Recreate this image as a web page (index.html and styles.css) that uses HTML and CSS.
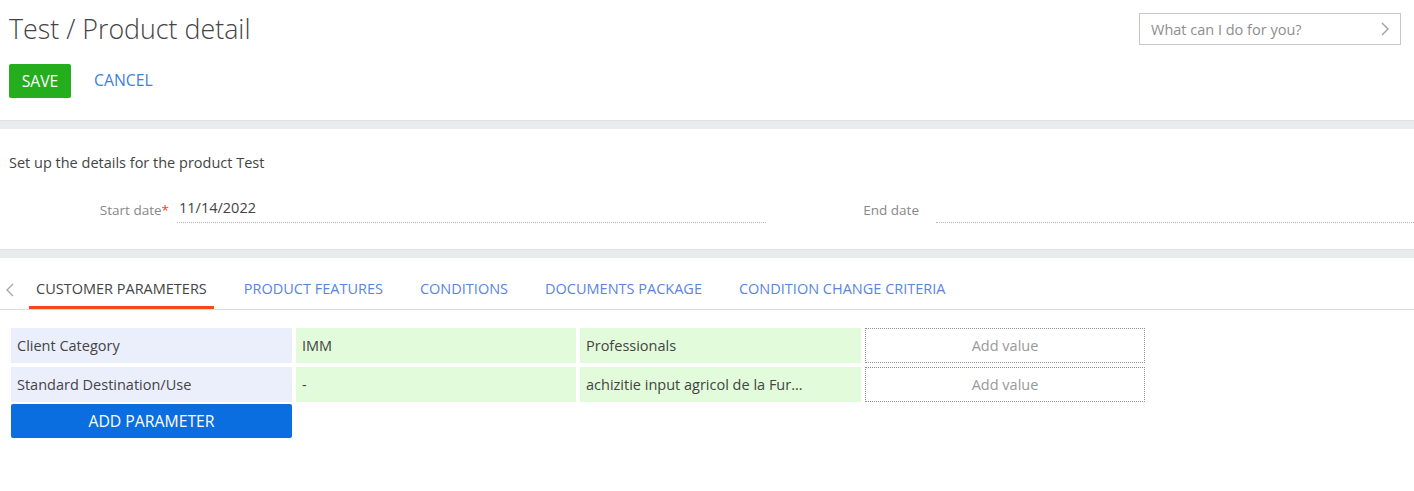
FILE: index.html
```html
<!DOCTYPE html>
<html lang="en">
<head>
    <meta charset="UTF-8">
    <meta name="viewport" content="width=device-width, initial-scale=1.0">
    <title>Test / Product detail</title>
    <link rel="stylesheet" href="styles.css">
</head>
<body>
    <div class="header">
        <div class="header-left">
            <h1 class="page-title">Test / Product detail</h1>
            <div class="actions">
                <button class="btn-save">SAVE</button>
                <a class="btn-cancel" href="#">CANCEL</a>
            </div>
        </div>
        <div class="search">
            <span class="search-text">What can I do for you?</span>
            <svg class="search-arrow" width="10" height="16" viewBox="0 0 10 16">
                <path d="M2 2 L8 8 L2 14" fill="none" stroke="#a0a0a0" stroke-width="1.4"/>
            </svg>
        </div>
    </div>

    <div class="band"></div>

    <div class="details">
        <p class="intro">Set up the details for the product Test</p>
        <div class="fields">
            <div class="field field-start">
                <label class="field-label">Start date<span class="required">*</span></label>
                <div class="field-value">11/14/2022</div>
            </div>
            <div class="field field-end">
                <label class="field-label">End date</label>
                <div class="field-value"></div>
            </div>
        </div>
    </div>

    <div class="band"></div>

    <div class="tabs">
        <svg class="tabs-prev" width="10" height="16" viewBox="0 0 10 16">
            <path d="M8 2 L2 8 L8 14" fill="none" stroke="#a8a8a8" stroke-width="1.4"/>
        </svg>
        <a class="tab active" href="#">CUSTOMER PARAMETERS</a>
        <a class="tab" href="#">PRODUCT FEATURES</a>
        <a class="tab" href="#">CONDITIONS</a>
        <a class="tab" href="#">DOCUMENTS PACKAGE</a>
        <a class="tab" href="#">CONDITION CHANGE CRITERIA</a>
    </div>

    <div class="params">
        <div class="param-row">
            <div class="cell cell-name">Client Category</div>
            <div class="cell cell-value">IMM</div>
            <div class="cell cell-value">Professionals</div>
            <div class="cell cell-add">Add value</div>
        </div>
        <div class="param-row">
            <div class="cell cell-name">Standard Destination/Use</div>
            <div class="cell cell-value">-</div>
            <div class="cell cell-value">achizitie input agricol de la Fur...</div>
            <div class="cell cell-add">Add value</div>
        </div>
        <button class="btn-add">ADD PARAMETER</button>
    </div>
</body>
</html>
```

FILE: styles.css
```css
body {
    margin: 0;
    font-family: "Open Sans", Arial, sans-serif;
    font-size: 14.5px;
    color: #444;
    background-color: #ffffff;
}
.header {
    display: flex;
    justify-content: space-between;
    height: 120px;
    padding: 0 13px 0 9px;
    box-sizing: border-box;
}
.page-title {
    margin: 0;
    padding-top: 11px;
    font-size: 26.8px;
    font-weight: 300;
    line-height: 36px;
    color: #444;
}
.actions {
    display: flex;
    align-items: center;
    margin-top: 17px;
}
.btn-save {
    height: 34px;
    width: 62px;
    padding: 0;
    background-color: #24ad1d;
    color: #fff;
    border: none;
    border-radius: 2px;
    font-family: inherit;
    font-size: 15.75px;
}
.btn-cancel {
    margin-left: 23px;
    margin-top: -3px;
    color: #3e7fd9;
    text-decoration: none;
    font-size: 15.75px;
}
.search {
    display: flex;
    align-items: center;
    justify-content: space-between;
    margin-top: 13px;
    width: 262px;
    height: 32px;
    padding: 0 10px 0 11px;
    border: 1px solid #c8c8c8;
    box-sizing: border-box;
}
.search-text {
    color: #8e8e8e;
}
.band {
    height: 8px;
    background-color: #e9ecec;
    border-top: 1px solid #dfe2e2;
}
.details {
    height: 120px;
    padding: 24px 0 0 9px;
    box-sizing: border-box;
}
.intro {
    margin: 0;
    line-height: 20px;
}
.fields {
    display: flex;
    margin-top: 25px;
}
.field {
    display: flex;
    align-items: flex-end;
}
.field-label {
    color: #888;
    font-size: 13.5px;
    text-align: right;
    padding-right: 8px;
    padding-bottom: 4px;
}
.field-start .field-label {
    width: 160px;
}
.field-end {
    flex: 1;
    margin-left: 72px;
}
.field-end .field-label {
    width: 81px;
    padding-right: 17px;
    box-sizing: content-box;
}
.required {
    color: #e4472d;
}
.field-value {
    height: 25px;
    line-height: 20px;
    padding-left: 2px;
    border-bottom: 1px dotted #b8b8b8;
    box-sizing: border-box;
}
.field-start .field-value {
    width: 589px;
}
.field-end .field-value {
    flex: 1;
}
.tabs {
    display: flex;
    align-items: flex-end;
    height: 52px;
    border-bottom: 1px solid #dcdcdc;
    box-sizing: border-box;
}
.tabs-prev {
    margin: 0 14px 11px 5px;
}
.tab {
    padding: 0 7px 8px;
    margin-right: 23px;
    color: #5b84df;
    text-decoration: none;
    line-height: 18px;
    border-bottom: 3px solid transparent;
}
.tab.active {
    color: #444;
    border-bottom-color: #f2481c;
}
.params {
    display: grid;
    grid-template-columns: 281px 280px 281px 280px;
    column-gap: 4px;
    padding: 18px 0 0 11px;
}
.param-row {
    display: contents;
}
.cell {
    height: 35px;
    margin-bottom: 4px;
    line-height: 35px;
    padding: 0 6px;
    box-sizing: border-box;
    white-space: nowrap;
    overflow: hidden;
}
.cell-name {
    background-color: #ebeffc;
}
.cell-value {
    background-color: #e2fbdb;
}
.cell-add {
    line-height: 33px;
    text-align: center;
    color: #999;
    border: 1px dotted #909090;
}
.btn-add {
    display: block;
    width: 281px;
    height: 34px;
    margin-top: -2px;
    padding: 0;
    background-color: #0b6ee0;
    color: #fff;
    border: none;
    border-radius: 2px;
    font-family: inherit;
    font-size: 15.75px;
}
```
